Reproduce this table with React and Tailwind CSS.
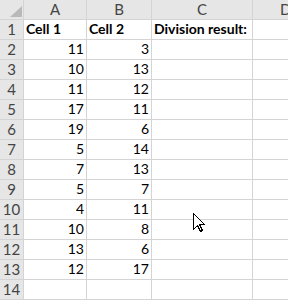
const colA = [11, 10, 11, 17, 19, 5, 7, 5, 4, 10, 13, 12];
const colB = [3, 13, 12, 11, 6, 14, 13, 7, 11, 8, 6, 17];

const font = { fontFamily: 'Lato, "Liberation Sans", sans-serif' };

const Header = ({ children, className = '' }) => (
  <div className={`bg-[#e6e6e6] text-[#444] text-[15px] flex items-center justify-center h-[19px] ${className}`}>
    {children}
  </div>
);

const Cell = ({ children, className = '' }) => (
  <div className={`bg-white h-[19px] flex items-end pb-[2px] text-[14px] leading-[16px] text-black overflow-visible whitespace-nowrap ${className}`}>
    {children}
  </div>
);

const Cursor = () => (
  <svg
    className="absolute left-[193px] top-[213px]"
    width="13"
    height="20"
    viewBox="0 0 13 20"
    shapeRendering="crispEdges"
  >
    <path
      d="M0.5 0.5 L0.5 16.5 L4.5 12.5 L7.5 18.5 L9.5 17.5 L6.5 11.5 L11.5 11.5 Z"
      fill="white"
      stroke="black"
      strokeWidth="1"
    />
  </svg>
);

export default function App() {
  const rows = [];
  for (let i = 1; i <= 14; i++) {
    rows.push(i);
  }

  return (
    <div className="relative w-[288px] h-[300px] overflow-hidden bg-white" style={font}>
      <div className="grid grid-cols-[23px_62px_64px_100px_35px] gap-px bg-[#d4d4d4] pb-px">
        <div className="bg-[#e6e6e6] h-[19px] relative">
          <div className="absolute right-[1px] bottom-[2px] w-0 h-0 border-l-[12px] border-l-transparent border-b-[11px] border-b-[#b9b9b9]" />
        </div>
        <Header>A</Header>
        <Header>B</Header>
        <Header>C</Header>
        <Header className="justify-start pl-[27px]">D</Header>

        {rows.map((r) => (
          <div key={r} className="contents">
            <Header>{r}</Header>
            {r === 1 ? (
              <>
                <Cell className="font-bold pl-[2px]">Cell 1</Cell>
                <Cell className="font-bold pl-[2px]">Cell 2</Cell>
                <Cell className="font-bold pl-[2px]">Division result:</Cell>
                <Cell />
              </>
            ) : (
              <>
                <Cell className="justify-end pr-[2px]">{r <= 13 ? colA[r - 2] : ''}</Cell>
                <Cell className="justify-end pr-[2px]">{r <= 13 ? colB[r - 2] : ''}</Cell>
                <Cell />
                <Cell />
              </>
            )}
          </div>
        ))}
      </div>
      <Cursor />
    </div>
  );
}
